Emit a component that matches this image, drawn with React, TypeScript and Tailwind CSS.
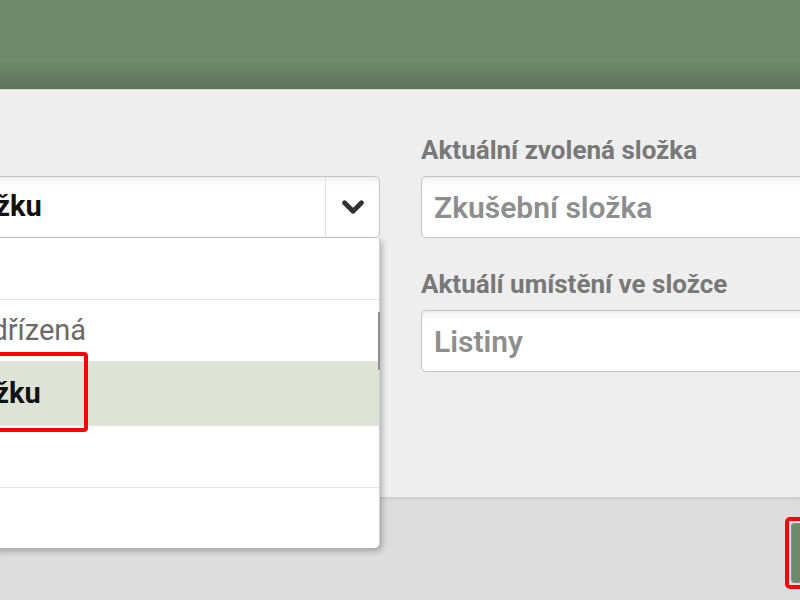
import { ChevronDown } from "lucide-react";

const font = { fontFamily: "Roboto, 'Liberation Sans', sans-serif" };

const options = [
  { label: "Listiny" },
  { label: "Složka nadřízená", muted: true },
  { label: "Zvolte složku", active: true },
  { label: "Smlouvy" },
  { label: "Faktury" },
];

function Field({ label, value }: { label: string; value: string }) {
  return (
    <div className="flex flex-col">
      <label className="text-[26px] leading-[30px] font-bold text-[#787878] mb-[11px]">{label}</label>
      <div className="h-[62px] w-[420px] rounded-[5px] border border-[#c4c4c4] bg-white shadow-[inset_0_6px_8px_-5px_rgba(0,0,0,0.12)] flex items-center pl-[12px]">
        <span className="text-[30px] font-semibold text-[#8e8e8e]">{value}</span>
      </div>
    </div>
  );
}

export default function App() {
  return (
    <div className="relative w-[800px] h-[600px] overflow-hidden flex flex-col bg-[#eeeeee]" style={font}>
      {/* top bar */}
      <div className="h-[90px] shrink-0 bg-[linear-gradient(to_bottom,#6e8a6a_0%,#6e8a6a_68%,#5c7358_100%)] border-b border-[#d6dad3]" />

      {/* dialog body */}
      <div className="h-[407px] shrink-0 flex pt-[45px] gap-[41px]">
        <div className="relative w-[530px] -ml-[150px] shrink-0 pt-[41px]">
          <div className="flex h-[62px] rounded-[5px] border border-[#c4c4c4] bg-white shadow-[inset_0_6px_8px_-5px_rgba(0,0,0,0.12)]">
            <div className="flex-1 flex items-center pl-[17px]">
              <span className="text-[29px] font-bold text-[#111111]">Zvolte složku</span>
            </div>
            <div className="w-[54px] border-l border-[#e2e2e2] flex items-center justify-center">
              <ChevronDown size={34} strokeWidth={3.4} className="text-[#333333]" />
            </div>
          </div>

          {/* open list */}
          <div className="absolute left-0 right-0 top-[103px] z-10 bg-white border-r border-[#cfcfcf] rounded-br-[5px] shadow-[2px_3px_6px_rgba(0,0,0,0.28)]">
            {options.map((o, i) => (
              <div
                key={i}
                className={
                  "flex items-center pl-[17px] border-b border-[#e3e3e3] " +
                  (i === 2 ? "h-[64px] " : i === 4 ? "h-[60px] border-b-0 " : "h-[62px] ") +
                  (o.active ? "bg-[#dde4d6]" : "")
                }
              >
                <span
                  className={
                    "text-[29px] " +
                    (o.active ? "font-bold text-[#111111]" : o.muted ? "text-[#6a6a6a]" : "text-[#333333]")
                  }
                >
                  {o.label}
                </span>
              </div>
            ))}
            <div className="absolute -right-px top-[74px] h-[58px] w-[2px] bg-[#8f8f8f]" />
          </div>

          {/* highlight around the chosen row */}
          <div className="absolute z-20 left-0 w-[238px] top-[217px] h-[80px] rounded-[4px] border-[4px] border-[#ff0000]" />
        </div>

        <div className="flex flex-col gap-[31px] shrink-0">
          <Field label="Aktuální zvolená složka" value="Zkušební složka" />
          <Field label="Aktuálí umístění ve složce" value="Listiny" />
        </div>
      </div>

      {/* footer with buttons */}
      <div className="flex-1 bg-[#dddddd] shadow-[inset_0_4px_4px_-3px_rgba(0,0,0,0.12)] flex justify-end pt-[20px]">
        <div className="relative -mr-[60px] w-[75px] h-[72px] rounded-[5px] border-[4px] border-[#ff0000] p-[2px]">
          <div className="h-full w-full rounded-[3px] border border-[#8b8b8b] bg-[#6e8a6a]" />
        </div>
      </div>
    </div>
  );
}
